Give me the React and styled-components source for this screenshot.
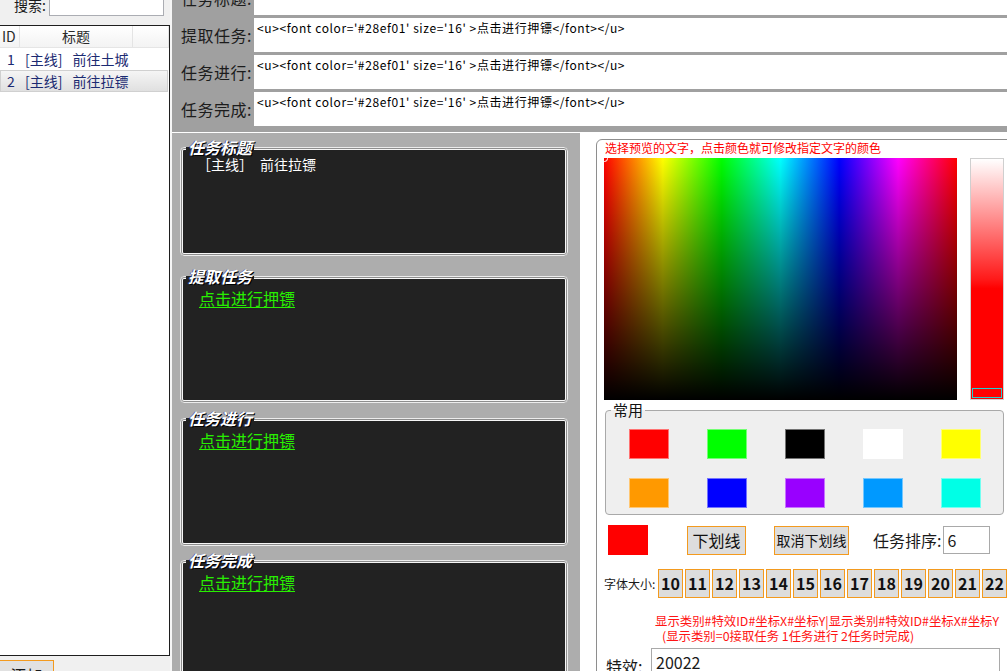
import React from "react";
import styled, { createGlobalStyle } from "styled-components";

const FONT = `"Noto Sans CJK SC", "Noto Sans", sans-serif`;

const GlobalStyle = createGlobalStyle`
  html, body {
    margin: 0;
    padding: 0;
    background: #f0f0f0;
    overflow: hidden;
  }
  #root {
    width: 1007px;
    height: 671px;
  }
  * {
    box-sizing: border-box;
  }
`;

const Window = styled.div`
  display: flex;
  width: 1007px;
  height: 671px;
  overflow: hidden;
  font-family: ${FONT};
  color: #1a1a1a;
`;

/* ---------- left list ---------- */

const Sidebar = styled.div`
  width: 170px;
  flex: none;
  display: flex;
  flex-direction: column;
  background: #f0f0f0;
  overflow: hidden;
`;

const SearchRow = styled.div`
  display: flex;
  align-items: center;
  flex: none;
  height: 22px;
  margin-top: -6px;
`;

const SearchLabel = styled.span`
  width: 46px;
  text-align: right;
  font-size: 14px;
  line-height: 16px;
`;

const SearchInput = styled.div`
  width: 115px;
  height: 22px;
  margin-left: 3px;
  background: #fff;
  border: 1px solid #abadb3;
`;

const TaskList = styled.div`
  flex: none;
  height: 631px;
  margin-top: 9px;
  background: #fff;
  border: 1px solid #1e1e1e;
  border-left: none;
`;

const ListHeader = styled.div`
  display: grid;
  grid-template-columns: 20px 113px 1fr;
  height: 22px;
  background: linear-gradient(#ffffff, #f3f3f3);
  border-bottom: 1px solid #e5e5e5;
  font-size: 14px;
  line-height: 21px;
  color: #2a2a2a;
`;

const HeaderCell = styled.div`
  border-right: 1px solid #e4e4e4;
  text-align: ${(p) => p.$align || "left"};
  padding-left: ${(p) => p.$pad || 0}px;
`;

const ListRow = styled.div`
  display: grid;
  grid-template-columns: 20px 1fr;
  height: 22px;
  margin-right: 1px;
  font-size: 14px;
  line-height: 20px;
  color: #1b2a72;
  border: 1px solid ${(p) => (p.$selected ? "#d0d0d0" : "transparent")};
  background: ${(p) =>
    p.$selected ? "linear-gradient(#f5f5f5, #e0e0e0)" : "transparent"};
`;

const RowId = styled.span`
  text-align: center;
`;

const RowTitle = styled.span`
  padding-left: 4px;
  white-space: pre;
`;

const AddButton = styled.div`
  flex: none;
  width: 55px;
  height: 30px;
  margin: 4px 0 0 -1px;
  background: #e1e1e1;
  border: 1px solid #f39a1e;
  font-size: 16px;
  line-height: 28px;
  text-align: center;
`;

/* ---------- main area ---------- */

const Main = styled.div`
  flex: 1;
  min-width: 0;
  display: flex;
  flex-direction: column;
  border-left: 2px solid #f6f6f6;
`;

const FormArea = styled.div`
  flex: none;
  height: 133px;
  background: #a0a0a0;
  border-bottom: 1px solid #ffffff;
  overflow: hidden;
`;

const FormRows = styled.div`
  display: flex;
  flex-direction: column;
  gap: 3px;
  margin-top: -19px;
`;

const FormRow = styled.div`
  display: grid;
  grid-template-columns: 82px 1fr;
  height: 34px;
`;

const FormLabel = styled.span`
  align-self: center;
  padding-left: 9px;
  font-size: 16px;
  line-height: 20px;
  letter-spacing: 0.5px;
  color: #1c1c1c;
`;

const FormField = styled.div`
  background: #fff;
  padding: 2px 3px;
  font-size: 12px;
  line-height: 16px;
  letter-spacing: 0.6px;
  color: #000;
  white-space: nowrap;
  overflow: hidden;
`;

const Lower = styled.div`
  flex: 1;
  min-height: 0;
  display: flex;
`;

/* ---------- preview column ---------- */

const PreviewColumn = styled.div`
  flex: none;
  width: 408px;
  display: flex;
  flex-direction: column;
  padding: 5px 12px 0 8px;
  background: #adadad;
  overflow: hidden;
`;

const PreviewGroup = styled.div`
  flex: none;
  display: flex;
  flex-direction: column;
  margin-top: ${(p) => p.$gap}px;
`;

const GroupLegend = styled.span`
  position: relative;
  z-index: 1;
  align-self: flex-start;
  height: 18px;
  margin: 0 0 -9px 6px;
  padding: 0 2px;
  font-size: 16px;
  line-height: 18px;
  font-style: italic;
  font-weight: 700;
  color: #fff;
  background: linear-gradient(transparent 9px, #222 9px);
  text-shadow: 1px 1px 0 #000, -1px 0 0 rgba(40, 60, 160, 0.7);
`;

const PreviewBox = styled.div`
  height: ${(p) => p.$h}px;
  padding: 7px 16px;
  background: #222;
  border: 1px solid #ececec;
  border-radius: 4px;
  box-shadow: inset 0 0 0 1px #8d8d8d, inset 0 0 0 2px #f6f6f6;
`;

const TitleText = styled.div`
  color: #fff;
  font-size: 14px;
  line-height: 18px;
  white-space: pre;
`;

const LinkText = styled.span`
  display: inline-block;
  margin: 4px 0 0 2px;
  color: #28ef01;
  font-size: 16px;
  line-height: 20px;
  text-decoration: underline;
  text-underline-offset: 2px;
`;

/* ---------- editor column ---------- */

const Editor = styled.div`
  flex: 1;
  min-width: 0;
  padding: 6px 0 0 16px;
  background: #fff;
  overflow: hidden;
`;

const EditorGroup = styled.div`
  width: 420px;
  min-height: 560px;
  padding: 0 0 0 7px;
  border: 1px solid #8e8e8e;
  border-radius: 6px;
`;

const Hint = styled.div`
  margin-left: 1px;
  font-size: 12px;
  line-height: 16px;
  color: #ff0000;
  white-space: nowrap;
`;

const PickerRow = styled.div`
  display: flex;
  gap: 13px;
  height: 242px;
  margin-top: 2px;
`;

const ColorField = styled.div`
  position: relative;
  width: 353px;
  height: 242px;
  background: linear-gradient(to bottom, rgba(0, 0, 0, 0) 0%, #000 100%),
    linear-gradient(
      to right,
      #ff0000 0%,
      #ffff00 16.67%,
      #00ff00 33.33%,
      #00ffff 50%,
      #0000ff 66.67%,
      #ff00ff 83.33%,
      #ff0000 100%
    );
`;

const FieldMarker = styled.span`
  position: absolute;
  left: -3px;
  top: -3px;
  width: 7px;
  height: 7px;
  border: 1px solid #fff;
  border-radius: 50%;
`;

const HueSlider = styled.div`
  width: 34px;
  height: 242px;
  display: flex;
  align-items: flex-end;
  padding: 1px;
  border: 1px solid #cfcfcf;
  background: linear-gradient(#ffffff 0%, #ff1a1a 50%, #ff0000 54%, #ff0000 100%);
`;

const SliderThumb = styled.span`
  width: 100%;
  height: 10px;
  border: 1px solid #1fd3d3;
`;

const CommonGroup = styled.div`
  display: flex;
  flex-direction: column;
  margin: 2px 0 0 1px;
`;

const CommonLegend = styled.span`
  position: relative;
  z-index: 1;
  align-self: flex-start;
  height: 16px;
  margin: 0 0 -8px 6px;
  padding: 0 2px;
  font-size: 15px;
  line-height: 16px;
  color: #111;
  background: linear-gradient(#fff 8px, #efefef 8px);
`;

const CommonBox = styled.div`
  width: 399px;
  display: grid;
  grid-template-columns: repeat(5, 40px);
  column-gap: 38px;
  row-gap: 19px;
  padding: 18px 0 6px 23px;
  background: #efefef;
  border: 1px solid #a9a9a9;
  border-radius: 4px;
`;

const Swatch = styled.span`
  width: 40px;
  height: 30px;
  background: ${(p) => p.$color};
  border: 1px solid rgba(255, 255, 255, 0.45);
`;

const ToolRow = styled.div`
  display: flex;
  align-items: center;
  height: 30px;
  margin-top: 10px;
`;

const CurrentSwatch = styled.span`
  width: 40px;
  height: 30px;
  margin-left: 4px;
  background: #ff0000;
`;

const OrangeButton = styled.div`
  flex: none;
  width: ${(p) => p.$w}px;
  height: 29px;
  margin-left: ${(p) => p.$ml || 0}px;
  background: #dddddd;
  border: 1px solid #f39a1e;
  font-size: ${(p) => p.$size}px;
  font-weight: ${(p) => (p.$bold ? 700 : 400)};
  line-height: 27px;
  text-align: center;
  color: #111;
`;

const OrderLabel = styled.span`
  margin-left: 24px;
  font-size: 16px;
  line-height: 20px;
`;

const OrderInput = styled.div`
  width: 47px;
  height: 28px;
  margin-left: 2px;
  padding: 0 3px;
  border: 1px solid #a9a9a9;
  font-size: 16px;
  line-height: 26px;
`;

const FontRow = styled.div`
  display: flex;
  align-items: center;
  gap: 2px;
  height: 29px;
  margin-top: 14px;
`;

const FontLabel = styled.span`
  flex: none;
  width: 52px;
  font-size: 12px;
  line-height: 16px;
  white-space: nowrap;
`;

const Note = styled.div`
  margin: 16px 0 0 51px;
  font-size: 12.4px;
  line-height: 15px;
  color: #ff1414;
  white-space: nowrap;
`;

const NoteLine = styled.div`
  padding-left: ${(p) => p.$indent || 0}px;
`;

const EffectRow = styled.div`
  display: flex;
  align-items: flex-start;
  margin-top: 4px;
`;

const EffectLabel = styled.span`
  width: 45px;
  margin: 8px 0 0 2px;
  font-size: 16px;
  line-height: 20px;
`;

const EffectInput = styled.div`
  width: 349px;
  height: 70px;
  padding: 3px 4px;
  border: 1px solid #a9a9a9;
  font-size: 16px;
  line-height: 20px;
`;

const tasks = [
  { id: 1, title: "[主线]\u2002 前往土城" },
  { id: 2, title: "[主线]\u2002 前往拉镖", selected: true },
];

const linkCode =
  "<u><font color='#28ef01' size='16' >点击进行押镖</font></u>";

const formRows = [
  { label: "任务标题:", value: "[主线] 前往拉镖" },
  { label: "提取任务:", value: linkCode },
  { label: "任务进行:", value: linkCode },
  { label: "任务完成:", value: linkCode },
];

const previews = [
  { title: "任务标题", gap: 0, h: 109, text: "［主线］　前往拉镖" },
  { title: "提取任务", gap: 11, h: 127, link: "点击进行押镖" },
  { title: "任务进行", gap: 6, h: 128, link: "点击进行押镖" },
  { title: "任务完成", gap: 5, h: 140, link: "点击进行押镖" },
];

const swatches = [
  "#ff0000",
  "#00ff00",
  "#000000",
  "#ffffff",
  "#ffff00",
  "#ff9900",
  "#0000ff",
  "#9900ff",
  "#0099ff",
  "#00ffe6",
];

const sizes = [10, 11, 12, 13, 14, 15, 16, 17, 18, 19, 20, 21, 22, 23, 24];

export default function App() {
  return (
    <Window>
      <GlobalStyle />
      <Sidebar>
        <SearchRow>
          <SearchLabel>搜索:</SearchLabel>
          <SearchInput />
        </SearchRow>
        <TaskList>
          <ListHeader>
            <HeaderCell $pad={2}>ID</HeaderCell>
            <HeaderCell $align="center">标题</HeaderCell>
            <HeaderCell />
          </ListHeader>
          {tasks.map((t) => (
            <ListRow key={t.id} $selected={t.selected}>
              <RowId>{t.id}</RowId>
              <RowTitle>{t.title}</RowTitle>
            </ListRow>
          ))}
        </TaskList>
        <AddButton>添加</AddButton>
      </Sidebar>

      <Main>
        <FormArea>
          <FormRows>
            {formRows.map((r) => (
              <FormRow key={r.label}>
                <FormLabel>{r.label}</FormLabel>
                <FormField>{r.value}</FormField>
              </FormRow>
            ))}
          </FormRows>
        </FormArea>

        <Lower>
          <PreviewColumn>
            {previews.map((p) => (
              <PreviewGroup key={p.title} $gap={p.gap}>
                <GroupLegend>{p.title}</GroupLegend>
                <PreviewBox $h={p.h}>
                  {p.text && <TitleText>{p.text}</TitleText>}
                  {p.link && <LinkText>{p.link}</LinkText>}
                </PreviewBox>
              </PreviewGroup>
            ))}
          </PreviewColumn>

          <Editor>
            <EditorGroup>
              <Hint>选择预览的文字，点击颜色就可修改指定文字的颜色</Hint>
              <PickerRow>
                <ColorField>
                  <FieldMarker />
                </ColorField>
                <HueSlider>
                  <SliderThumb />
                </HueSlider>
              </PickerRow>

              <CommonGroup>
                <CommonLegend>常用</CommonLegend>
                <CommonBox>
                  {swatches.map((c) => (
                    <Swatch key={c} $color={c} />
                  ))}
                </CommonBox>
              </CommonGroup>

              <ToolRow>
                <CurrentSwatch />
                <OrangeButton $w={59} $ml={39} $size={16}>
                  下划线
                </OrangeButton>
                <OrangeButton $w={75} $ml={28} $size={14}>
                  取消下划线
                </OrangeButton>
                <OrderLabel>任务排序:</OrderLabel>
                <OrderInput>6</OrderInput>
              </ToolRow>

              <FontRow>
                <FontLabel>字体大小:</FontLabel>
                {sizes.map((s) => (
                  <OrangeButton key={s} $w={25} $size={16} $bold>
                    {s}
                  </OrangeButton>
                ))}
              </FontRow>

              <Note>
                <NoteLine>显示类别#特效ID#坐标X#坐标Y|显示类别#特效ID#坐标X#坐标Y</NoteLine>
                <NoteLine $indent={7}>(显示类别=0接取任务 1任务进行 2任务时完成)</NoteLine>
              </Note>

              <EffectRow>
                <EffectLabel>特效:</EffectLabel>
                <EffectInput>20022</EffectInput>
              </EffectRow>
            </EditorGroup>
          </Editor>
        </Lower>
      </Main>
    </Window>
  );
}
